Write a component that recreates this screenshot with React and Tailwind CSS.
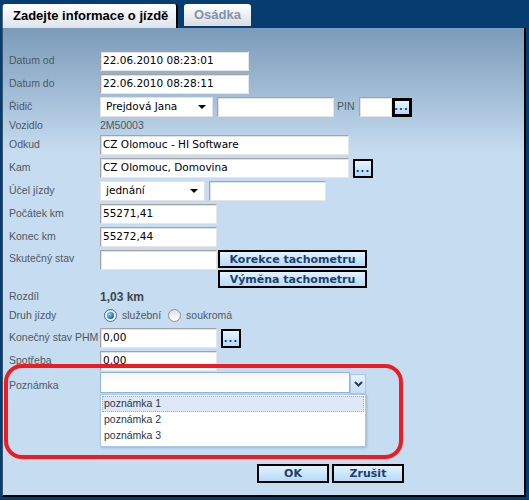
import React from 'react';

const label = "w-[91px] shrink-0 text-[10.5px] text-[#4f5862] font-['Liberation_Sans',Arial,sans-serif] whitespace-nowrap";
const inputBase =
  "h-[20px] bg-white border border-t-[#a3a3a3] border-l-[#a3a3a3] border-r-[#e6e6e6] border-b-[#e6e6e6] shadow-[inset_1px_1px_0_#e2e2e2] px-[2px] flex items-center text-[10.5px] text-black font-['DejaVu_Sans',Verdana,sans-serif] whitespace-nowrap overflow-hidden";
const blueBtn =
  "border-2 border-black bg-[linear-gradient(to_bottom,#e4f2fe,#b4dbfa)] text-[#1d3f6f] font-bold font-['DejaVu_Sans',Verdana,sans-serif] text-[11px] flex items-center justify-center leading-none";

function Select({ w, value }) {
  return (
    <div className={`${w} h-[20px] bg-white border border-[#e3e3e3] flex items-center justify-between pl-[5px] pr-[6px] text-[10.5px] font-['DejaVu_Sans',Verdana,sans-serif] text-black`}>
      <span>{value}</span>
      <span className="w-0 h-0 border-l-[4px] border-r-[4px] border-t-[4px] border-l-transparent border-r-transparent border-t-black" />
    </div>
  );
}

function Dots({ thick }) {
  return (
    <div className={`w-[20px] h-[19px] ${thick ? 'border-[3px]' : 'border-2'} border-black bg-[linear-gradient(to_bottom,#e6f3fe,#b3dbfa)] flex items-end justify-center pb-[2px]`}>
      <span className="text-[#1f3f70] text-[10px] font-bold leading-none tracking-[1px] font-['DejaVu_Sans',sans-serif]">...</span>
    </div>
  );
}

function Radio({ checked }) {
  return (
    <span className={`w-[13px] h-[13px] rounded-full border ${checked ? 'border-[#4a6a8c]' : 'border-[#8c9198]'} bg-[linear-gradient(to_bottom,#dfe2e6,#ffffff)] flex items-center justify-center`}>
      {checked && <span className="w-[7px] h-[7px] rounded-full bg-[radial-gradient(circle_at_35%_35%,#8fdcff,#1565a8_70%)]" />}
    </span>
  );
}

export default function App() {
  return (
    <div className="w-[529px] h-[500px] bg-[#063d70] flex flex-col overflow-hidden">
      <div className="h-[28px] flex items-end pl-[2px] gap-[6px]">
        <div className="h-[24px] w-[176px] rounded-t-[3px] border-l border-[#5b6b7b] border-r-2 border-r-black bg-[linear-gradient(to_bottom,#ffffff,#dde4ec)] pl-[10px] flex items-center text-[13px] font-bold text-black font-['Liberation_Sans',Arial,sans-serif]">
          Zadejte informace o jízdě
        </div>
        <div className="h-[22px] w-[67px] mb-[2px] rounded-t-[3px] bg-[linear-gradient(to_bottom,#ffffff,#d9dde2)] flex items-center justify-center text-[13px] font-bold text-[#7d93ad] font-['Liberation_Sans',Arial,sans-serif]">
          Osádka
        </div>
      </div>

      <div className="relative ml-[2px] w-[524px] h-[469px] border-l border-[#3d5470] border-r-2 border-b-2 border-r-black border-b-black bg-[linear-gradient(to_bottom,#7a9bb9_0px,#c6dcf0_125px,#c6dcf0_100%)] pt-[23px] pl-[6px] flex flex-col gap-[3px]">
        <div className="flex items-center">
          <div className={label}>Datum od</div>
          <div className={`${inputBase} w-[149px]`}>22.06.2010 08:23:01</div>
        </div>
        <div className="flex items-center">
          <div className={label}>Datum do</div>
          <div className={`${inputBase} w-[149px]`}>22.06.2010 08:28:11</div>
        </div>
        <div className="flex items-center">
          <div className={label}>Řidič</div>
          <Select w="w-[113px]" value="Prejdová Jana" />
          <div className={`${inputBase} w-[117px] ml-[4px]`} />
          <div className="ml-[3px] mr-[4px] text-[10.5px] text-[#4f5862] font-['Liberation_Sans',Arial,sans-serif]">PIN</div>
          <div className={`${inputBase} w-[33px]`} />
          <Dots thick />
        </div>
        <div className="flex items-center h-[12px]">
          <div className={label}>Vozidlo</div>
          <div className="text-[10.5px] text-[#4f5862] font-['Liberation_Sans',Arial,sans-serif]">2M50003</div>
        </div>
        <div className="flex items-center">
          <div className={label}>Odkud</div>
          <div className={`${inputBase} w-[249px]`}>CZ Olomouc - HI Software</div>
        </div>
        <div className="flex items-center">
          <div className={label}>Kam</div>
          <div className={`${inputBase} w-[249px]`}>CZ Olomouc, Domovina</div>
          <div className="ml-[4px]"><Dots /></div>
        </div>
        <div className="flex items-center">
          <div className={label}>Účel jízdy</div>
          <Select w="w-[105px]" value="jednání" />
          <div className={`${inputBase} w-[117px] ml-[4px]`} />
        </div>
        <div className="flex items-center">
          <div className={label}>Počátek km</div>
          <div className={`${inputBase} w-[117px]`}>55271,41</div>
        </div>
        <div className="flex items-center">
          <div className={label}>Konec km</div>
          <div className={`${inputBase} w-[117px]`}>55272,44</div>
        </div>
        <div className="flex items-start h-[38px]">
          <div className={`${label} mt-[1px]`}>Skutečný stav</div>
          <div className={`${inputBase} w-[117px]`} />
          <div className="ml-[1px] flex flex-col gap-[2px]">
            <div className={`${blueBtn} w-[149px] h-[18px]`}>Korekce tachometru</div>
            <div className={`${blueBtn} w-[149px] h-[18px]`}>Výměna tachometru</div>
          </div>
        </div>
        <div className="flex items-center h-[12px]">
          <div className={label}>Rozdíl</div>
          <div className="text-[12px] font-bold text-[#3c4652] font-['Liberation_Sans',Arial,sans-serif]">1,03 km</div>
        </div>
        <div className="flex items-center h-[19px]">
          <div className={label}>Druh jízdy</div>
          <div className="flex items-center ml-[4px] text-[10.5px] text-[#4f5862] font-['Liberation_Sans',Arial,sans-serif]">
            <Radio checked />
            <span className="ml-[5px]">služební</span>
            <span className="ml-[7px]"><Radio /></span>
            <span className="ml-[5px]">soukromá</span>
          </div>
        </div>
        <div className="flex items-center">
          <div className={label}>Konečný stav PHM</div>
          <div className={`${inputBase} w-[117px]`}>0,00</div>
          <div className="ml-[4px]"><Dots /></div>
        </div>
        <div className="flex items-center">
          <div className={label}>Spotřeba</div>
          <div className={`${inputBase} w-[117px] h-[19px]`}>0,00</div>
        </div>
        <div className="flex items-start -mt-[2px]">
          <div className={`${label} mt-[6px]`}>Poznámka</div>
          <div className="relative flex">
            <div className="w-[250px] h-[21px] border border-[#8fb3dc] bg-[linear-gradient(to_bottom,#f4f6f8,#ffffff_60%)]" />
            <div className="w-[16px] h-[20px] mt-[2px] border border-[#a8c6e6] bg-[linear-gradient(to_bottom,#e8f1fb,#c9ddf2)] flex items-center justify-center">
              <svg width="9" height="6" viewBox="0 0 9 6">
                <path d="M1 1 L4.5 4.5 L8 1" fill="none" stroke="#1f3c6e" strokeWidth="2" />
              </svg>
            </div>
            <div className="absolute left-0 top-[22px] w-[266px] h-[53px] bg-white border border-[#a9c8ea] shadow-[1px_1px_2px_rgba(80,110,150,0.35)] pt-[1px] text-[10.5px] text-[#2e3640] font-['Liberation_Sans',Arial,sans-serif]">
              <div className="h-[16px] mx-[1px] bg-[#dfe8f6] border border-dotted border-[#9aaed0] flex items-center pl-[1px]">poznámka 1</div>
              <div className="h-[16px] flex items-center pl-[3px]">poznámka 2</div>
              <div className="h-[16px] flex items-center pl-[3px]">poznámka 3</div>
            </div>
          </div>
        </div>
        <div className="flex mt-[67px] ml-[248px] gap-[3px]">
          <div className={`${blueBtn} w-[72px] h-[19px]`}>OK</div>
          <div className={`${blueBtn} w-[72px] h-[19px]`}>Zrušit</div>
        </div>

        <div className="absolute left-[1px] top-[336px] w-[399px] h-[95px] border-4 border-[#ec1c24] rounded-[18px] pointer-events-none" />
      </div>
    </div>
  );
}
